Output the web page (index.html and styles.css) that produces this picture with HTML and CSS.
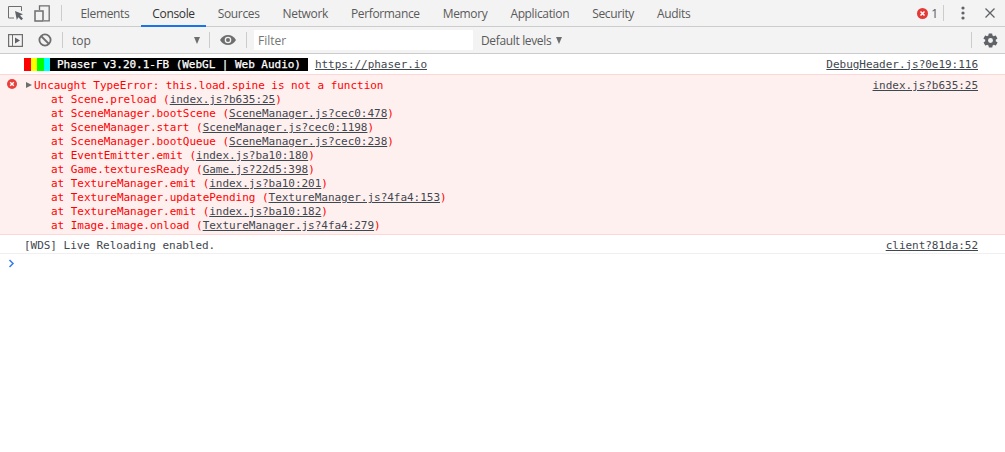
FILE: index.html
```html
<!DOCTYPE html>
<html lang="en">
<head>
<meta charset="utf-8">
<title>DevTools Console</title>
<link rel="stylesheet" href="styles.css">
</head>
<body>
<header class="tabbar">
  <button class="icon-btn first"><svg width="18" height="16" viewBox="0 0 18 16"><path d="M7 13H1.500V1.500H14.500V6" fill="none" stroke="#6e6e6e" stroke-width="1"/><path d="M8 6l8 3.200-3 1.300 3 3-1.700 1.700-3-3L9.800 15z" fill="#5f6368"/></svg></button>
  <button class="icon-btn"><svg width="16" height="17" viewBox="0 0 16 17"><path d="M5.500 5V.8h9.700v15H10" fill="none" stroke="#6e6e6e" stroke-width="1.300"/><rect x="1" y="6" width="8" height="10" fill="none" stroke="#6e6e6e" stroke-width="1.500"/></svg></button>
  <span class="sep"></span>
  <nav class="tabs">
    <span class="tab">Elements</span>
    <span class="tab active">Console</span>
    <span class="tab">Sources</span>
    <span class="tab">Network</span>
    <span class="tab">Performance</span>
    <span class="tab">Memory</span>
    <span class="tab">Application</span>
    <span class="tab">Security</span>
    <span class="tab">Audits</span>
  </nav>
  <div class="tab-right">
    <svg class="err-icon" width="11" height="11" viewBox="0 0 11 11"><circle cx="5.500" cy="5.500" r="5.500" fill="#e53935"/><path d="M3.500 3.500l4 4M7.500 3.500l-4 4" stroke="#fff" stroke-width="1.500"/></svg>
    <span class="err-count">1</span>
    <span class="sep small"></span>
    <svg class="kebab" width="4" height="14" viewBox="0 0 4 14"><circle cx="2" cy="2" r="1.600" fill="#5f6368"/><circle cx="2" cy="7" r="1.600" fill="#5f6368"/><circle cx="2" cy="12" r="1.600" fill="#5f6368"/></svg>
    <svg class="close" width="10" height="10" viewBox="0 0 10 10"><path d="M.5.500l9 9M9.500.500l-9 9" stroke="#5f6368" stroke-width="1.300"/></svg>
  </div>
</header>
<section class="toolbar">
  <button class="icon-btn sidebar-btn"><svg width="15" height="13" viewBox="0 0 15 13"><rect x=".6" y=".6" width="13.800" height="11.800" fill="none" stroke="#6e6e6e" stroke-width="1.200"/><path d="M4.500 1v11" stroke="#6e6e6e"/><path d="M7 3.500l5 3-5 3z" fill="#5f6368"/></svg></button>
  <button class="icon-btn clear-btn"><svg width="14" height="14" viewBox="0 0 14 14"><circle cx="7" cy="7" r="5.600" fill="none" stroke="#6e6e6e" stroke-width="1.800"/><path d="M3 3l8 8" stroke="#6e6e6e" stroke-width="1.800"/></svg></button>
  <span class="sep"></span>
  <div class="context"><span>top</span><span class="arrow"></span></div>
  <span class="sep"></span>
  <svg class="eye" width="16" height="10" viewBox="0 0 16 10"><path d="M0 5c2-3.300 4.800-5 8-5s6 1.700 8 5c-2 3.300-4.800 5-8 5S2 8.300 0 5z" fill="#6e6e6e"/><circle cx="8" cy="5" r="3.300" fill="#f3f3f3"/><circle cx="8" cy="5" r="2" fill="#6e6e6e"/></svg>
  <span class="sep"></span>
  <div class="filter">Filter</div>
  <div class="levels"><span>Default levels</span><span class="arrow"></span></div>
  <span class="sep push"></span>
  <svg class="gear" width="17" height="17" viewBox="0 0 24 24"><path fill="#5f6368" fill-rule="evenodd" d="M19.400 13c.1-.3.100-.7.100-1s0-.7-.1-1l2.100-1.600c.2-.2.200-.4.100-.6l-2-3.500c-.1-.2-.4-.3-.6-.2l-2.500 1c-.5-.4-1.100-.7-1.700-1l-.4-2.600c0-.3-.2-.5-.5-.5h-4c-.3 0-.5.200-.5.400l-.4 2.700c-.6.200-1.200.6-1.700 1l-2.500-1c-.2-.1-.5 0-.6.200l-2 3.500c-.1.200-.1.500.1.600L4.600 11c0 .3-.1.700-.1 1s0 .7.100 1l-2.100 1.600c-.2.200-.2.400-.1.600l2 3.500c.1.200.4.300.6.200l2.500-1c.5.400 1.100.7 1.700 1l.4 2.600c0 .3.200.5.500.5h4c.3 0 .5-.2.500-.4l.4-2.700c.6-.2 1.200-.6 1.700-1l2.500 1c.2.100.5 0 .6-.2l2-3.500c.1-.2.100-.5-.1-.6zM12 15.500a3.500 3.500 0 1 1 0-7 3.500 3.500 0 0 1 0 7z"/></svg>
</section>
<main class="console">
  <div class="msg banner-row">
    <div class="msg-body banner-body"><span class="banner"><i class="c1"></i><i class="c2"></i><i class="c3"></i><i class="c4"></i><span class="banner-text">Phaser v3.20.1-FB (WebGL | Web Audio)</span></span><a class="banner-link">https://phaser.io</a></div>
    <a class="src">DebugHeader.js?0e19:116</a>
  </div>
  <div class="msg error">
    <svg class="msg-err" width="10" height="10" viewBox="0 0 10 10"><circle cx="5" cy="5" r="5" fill="#e8403a"/><path d="M3.200 3.200l3.600 3.600M6.800 3.200l-3.600 3.600" stroke="#fff" stroke-width="1.400"/></svg>
    <span class="tri"></span>
    <div class="msg-body">
      <div>Uncaught TypeError: this.load.spine is not a function</div>
      <div class="trace">at Scene.preload (<a>index.js?b635:25</a>)</div>
      <div class="trace">at SceneManager.bootScene (<a>SceneManager.js?cec0:478</a>)</div>
      <div class="trace">at SceneManager.start (<a>SceneManager.js?cec0:1198</a>)</div>
      <div class="trace">at SceneManager.bootQueue (<a>SceneManager.js?cec0:238</a>)</div>
      <div class="trace">at EventEmitter.emit (<a>index.js?ba10:180</a>)</div>
      <div class="trace">at Game.texturesReady (<a>Game.js?22d5:398</a>)</div>
      <div class="trace">at TextureManager.emit (<a>index.js?ba10:201</a>)</div>
      <div class="trace">at TextureManager.updatePending (<a>TextureManager.js?4fa4:153</a>)</div>
      <div class="trace">at TextureManager.emit (<a>index.js?ba10:182</a>)</div>
      <div class="trace">at Image.image.onload (<a>TextureManager.js?4fa4:279</a>)</div>
    </div>
    <a class="src">index.js?b635:25</a>
  </div>
  <div class="msg log">
    <div class="msg-body">[WDS] Live Reloading enabled.</div>
    <a class="src">client?81da:52</a>
  </div>
  <div class="prompt"><svg width="7" height="9" viewBox="0 0 7 9"><path d="M1.500 1l3.500 3.500L1.500 8" fill="none" stroke="#367cf1" stroke-width="1.500"/></svg></div>
</main>
</body>
</html>
```
FILE: styles.css
```css
* { box-sizing: border-box; }
html, body { margin: 0; padding: 0; }
body {
  width: 1005px;
  height: 452px;
  overflow: hidden;
  background: #fff;
  font-family: "Open Sans", "Liberation Sans", sans-serif;
  font-size: 12px;
  color: #5a5a5a;
}
.icon-btn {
  width: 26px;
  height: 26px;
  padding: 0;
  margin: 0;
  border: 0;
  background: none;
  display: flex;
  align-items: center;
  justify-content: center;
  flex: none;
}
.icon-btn.first { margin-left: 3px; }
.sep { width: 1px; height: 16px; background: #ccc; flex: none; margin: 0 6px; }
.tabbar {
  height: 27px;
  background: #f3f3f3;
  border-bottom: 1px solid #ccc;
  display: flex;
  align-items: center;
}
.tabs { display: flex; height: 26px; margin-left: 1px; }
.tab {
  height: 27px;
  padding: 0 11.500px;
  line-height: 27px;
  letter-spacing: -0.35px;
  color: #5a5a5a;
}
.tab.active { color: #333; border-bottom: 2px solid #1a73e8; }
.tab-right { margin-left: auto; display: flex; align-items: center; }
.err-icon { margin-right: 3px; }
.err-count { margin-right: 5px; }
.sep.small { margin: 0; }
.kebab { margin: 0 0 0 17px; }
.close { margin: 0 10px 0 20px; }
.toolbar {
  height: 27px;
  background: #f3f3f3;
  border-bottom: 1px solid #ccc;
  display: flex;
  align-items: center;
}
.toolbar .sep { margin: 0; }
.sidebar-btn { margin-left: 2.500px; }
.clear-btn { margin: 0 4.500px 0 3px; }
.context {
  width: 146px;
  padding: 0 9px;
  display: flex;
  align-items: center;
  justify-content: space-between;
  color: #5a5a5a;
}
.arrow {
  display: inline-block;
  width: 0;
  height: 0;
  border-left: 3.500px solid transparent;
  border-right: 3.500px solid transparent;
  border-top: 7px solid #6e6e6e;
}
.eye { margin: 0 10px; flex: none; }
.filter {
  width: 219px;
  height: 20px;
  margin-left: 7px;
  padding-left: 4px;
  background: #fff;
  line-height: 22px;
  color: #757575;
}
.levels {
  margin-left: 8px;
  display: flex;
  align-items: center;
  gap: 5px;
  letter-spacing: -0.35px;
}
.push { margin-left: auto !important; }
.gear { margin: 0 6px 0 10px; flex: none; }
.console {
  font-family: "DejaVu Sans Mono", "Liberation Mono", monospace;
  font-size: 11px;
  line-height: 14px;
  letter-spacing: -0.03px;
  color: #3f474f;
}
.msg {
  position: relative;
  display: flex;
  justify-content: space-between;
  padding: 0 27px 0 24px;
  white-space: nowrap;
}
.src { color: #3f474f; text-decoration: underline; }
.msg-body a, .banner-link { text-decoration: underline; color: #3f474f; }
.banner-row { height: 20px; padding-top: 1px; align-items: center; }
.banner-body { display: flex; align-items: center; gap: 7px; }
.banner { display: flex; height: 13px; background: #000; }
.banner i { width: 6.500px; height: 13px; display: block; }
.c1 { background: #f00; }
.c2 { background: #ff0; }
.c3 { background: #0f0; }
.c4 { background: #0ff; }
.banner-text { color: #fff; padding: 0 7px; line-height: 13px; -webkit-text-stroke: .25px #fff; }
.error {
  height: 161px;
  padding-top: 4px;
  padding-left: 34px;
  background: #fff0f0;
  border-top: 1px solid #ffd6d6;
  border-bottom: 1px solid #ffd6d6;
  color: #f00;
}
.error .src { align-self: flex-start; }
.trace { padding-left: 17px; }
.msg-err { position: absolute; left: 7px; top: 4px; }
.tri {
  position: absolute;
  left: 26px;
  top: 7px;
  width: 0;
  height: 0;
  border-top: 3.500px solid transparent;
  border-bottom: 3.500px solid transparent;
  border-left: 6px solid #6e6e6e;
}
.log {
  height: 19px;
  padding-top: 3px;
  align-items: center;
  border-bottom: 1px solid #f0f0f0;
}
.prompt { padding: 5px 0 0 8px; height: 20px; }
.prompt svg { display: block; }
```
